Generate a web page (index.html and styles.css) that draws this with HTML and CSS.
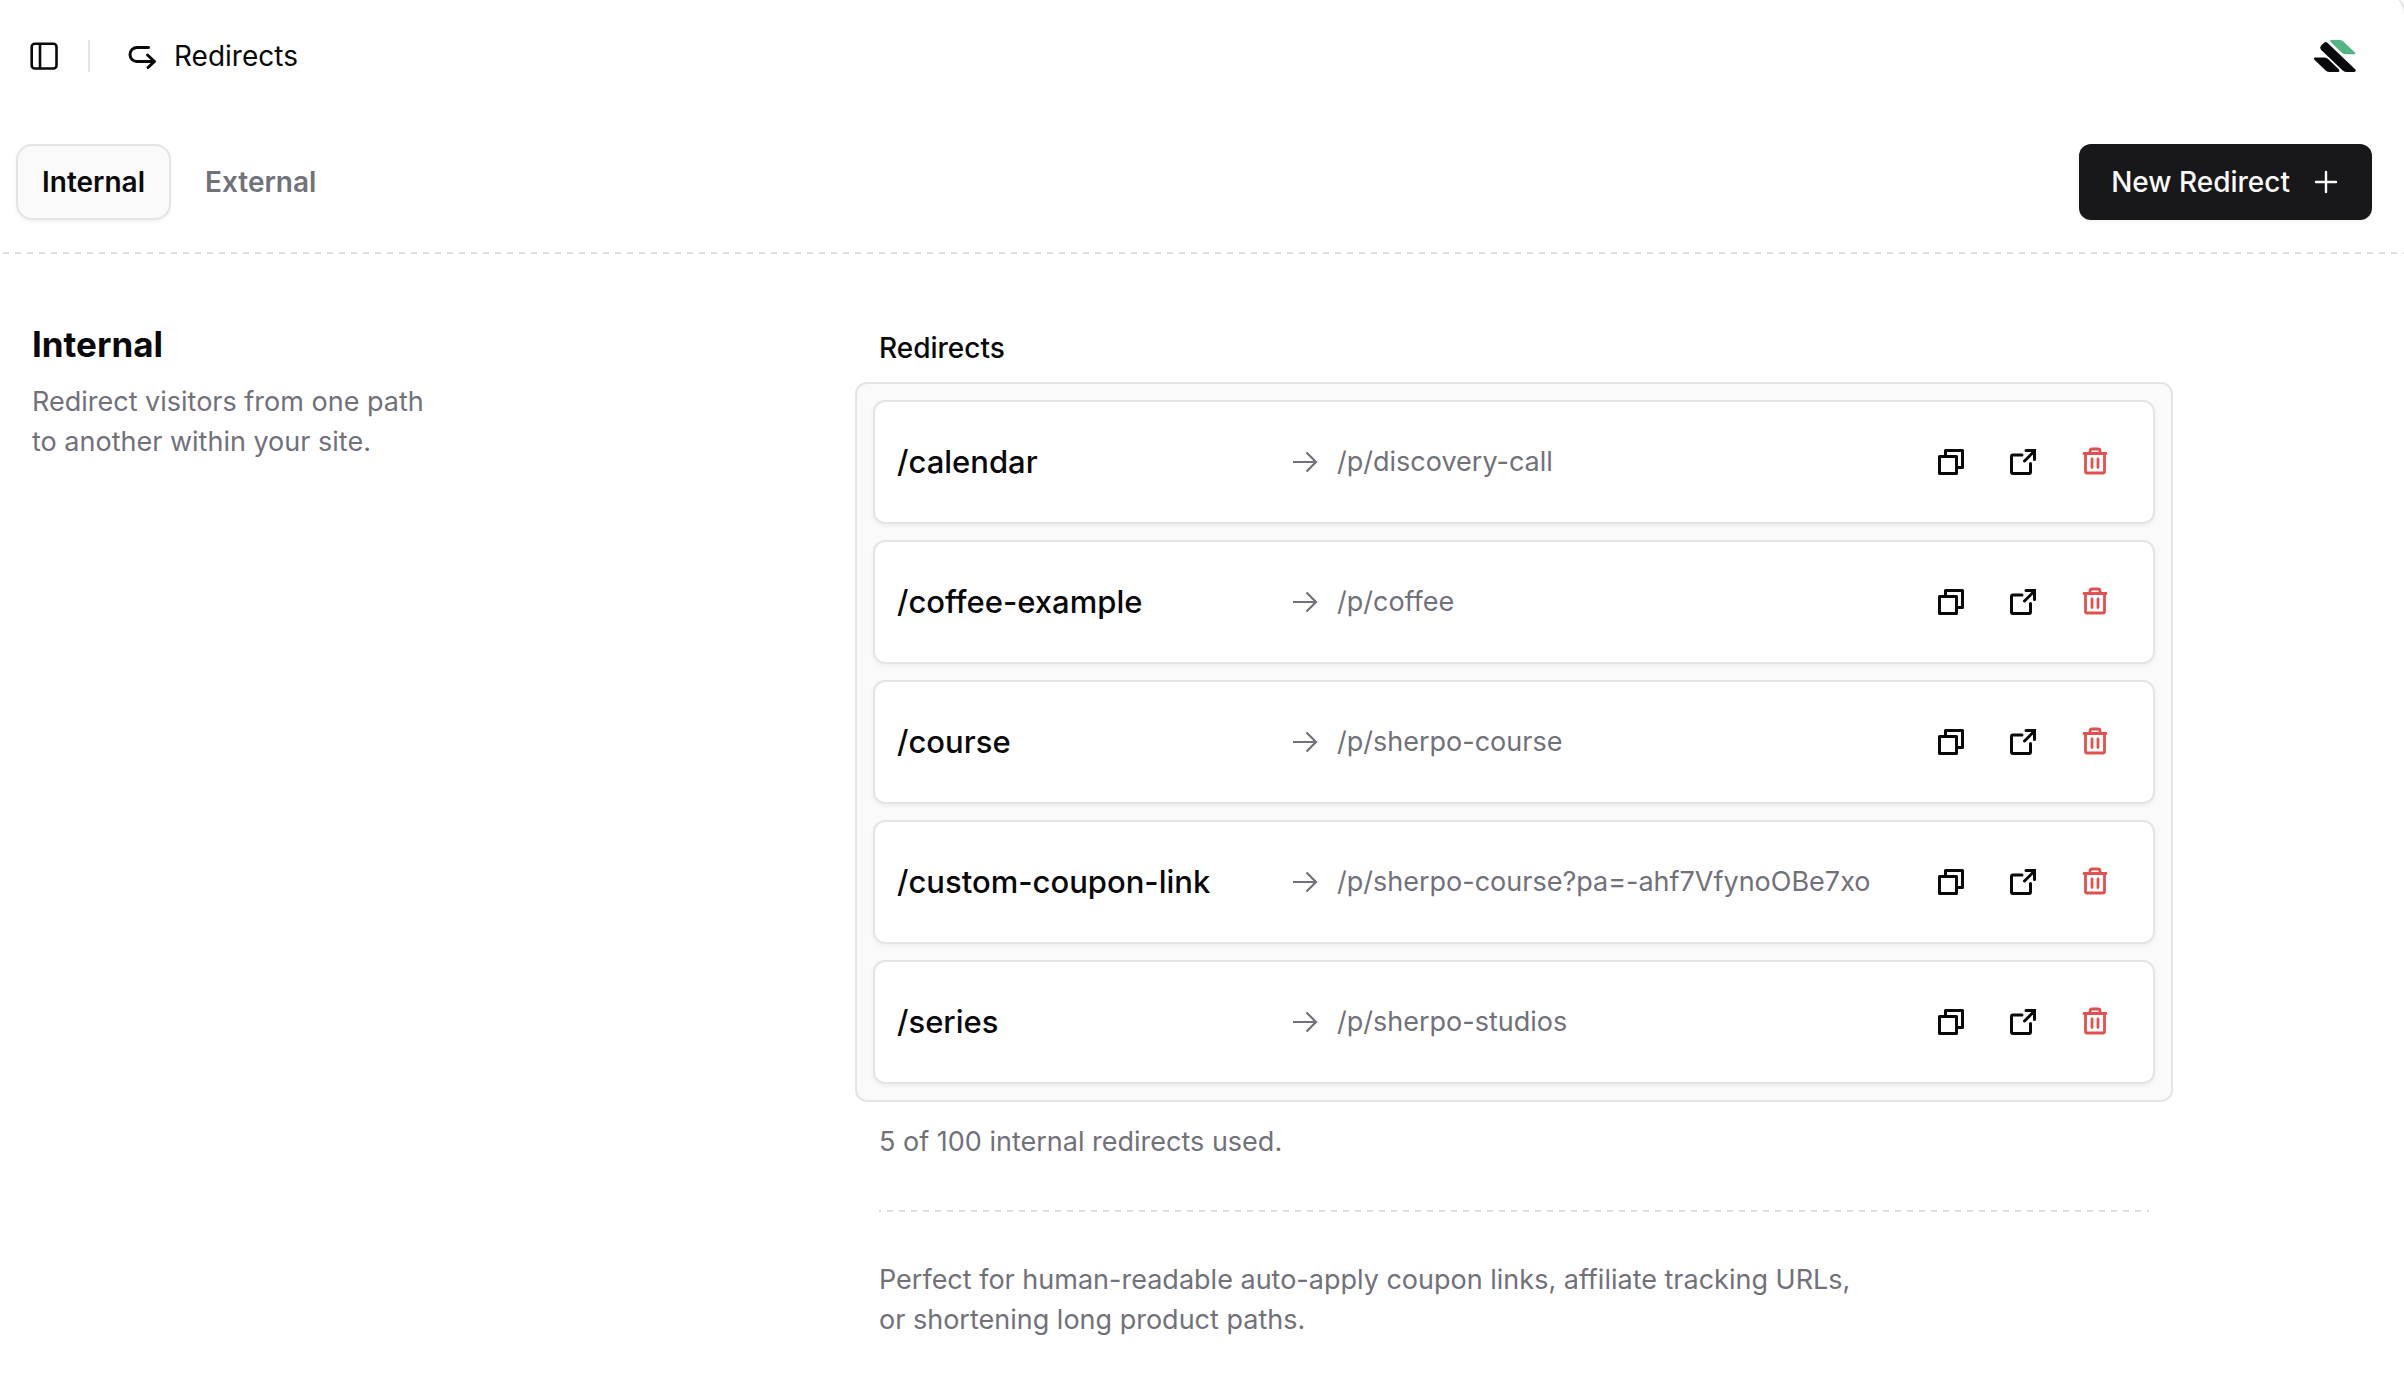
FILE: index.html
```html
<!DOCTYPE html>
<html lang="en">
<head>
  <meta charset="UTF-8">
  <meta name="viewport" content="width=device-width, initial-scale=1.0">
  <title>Redirects</title>
  <link rel="stylesheet" href="styles.css">
</head>
<body>
  <!-- Shared icons -->
  <svg class="sprite" aria-hidden="true">
    <symbol id="icon-arrow" viewBox="0 0 32 32">
      <path d="M4 16h23M17.500 6.500L27 16l-9.500 9.500" fill="none" stroke="currentColor" stroke-width="2.200"/>
    </symbol>
    <symbol id="icon-copy" viewBox="0 0 32 32">
      <path d="M10.500 10.500V4.500h17v17h-6M4.500 10.500h17v17H4.500z" fill="none" stroke="currentColor" stroke-width="3" stroke-linejoin="round"/>
    </symbol>
    <symbol id="icon-open" viewBox="0 0 32 32">
      <path d="M15 9H6q-1.500 0-1.500 1.500V26q0 1.500 1.500 1.500h16q1.500 0 1.500-1.500V17.500M17.500 15L27 5.500M19 4.500h8.500V13.500" fill="none" stroke="currentColor" stroke-width="3" stroke-linecap="round"/>
    </symbol>
    <symbol id="icon-trash" viewBox="0 0 32 32">
      <path d="M5 7.500h22M6.500 8V25.500q0 1.500 1.500 1.500h16q1.500 0 1.500-1.500V8M11 7V5q0-2 2-2h6q2 0 2 2V7M13 13v8.500M19 13v8.500" fill="none" stroke="currentColor" stroke-width="2.800" stroke-linecap="round"/>
    </symbol>
  </svg>

  <main class="app">
    <header class="topbar">
      <button class="icon-btn" type="button" aria-label="Toggle sidebar">
        <svg width="32" height="32" viewBox="0 0 32 32" fill="none" stroke="currentColor" stroke-width="2.600">
          <rect x="3.700" y="3.700" width="24.800" height="24.800" rx="3"/>
          <path d="M12 4v24"/>
        </svg>
      </button>
      <span class="divider"></span>
      <h1 class="page-title">
        <svg width="32" height="32" viewBox="0 0 32 32" fill="none" stroke="currentColor" stroke-width="3" stroke-linecap="round" stroke-linejoin="round">
          <path d="M22.500 7.500H11a7 7 0 0 0 0 14h17M21.500 15l7 6.500-6.500 6"/>
        </svg>
        Redirects
      </h1>
      <a class="logo" href="#" aria-label="Home">
        <svg width="42" height="32" viewBox="0 0 42 32">
          <path fill="#52b583" d="M17 0h8.500q2.200 0 3.800 1.400L41 12.500Q42 14.300 40 14.300H31.500q-1.900 0-3.400-1.400L16.400 1.800Q15.500 0 17 0z"/>
          <path fill="#09090b" d="M7.500 5.200L10.300 2.600q1.500-1.200 3.100.2L41.400 29.500Q42.700 32 40 32h-7q-2.500 0-4.300-1.600L7.500 10.200q-2.500-2.600 0-5z"/>
          <path fill="#09090b" d="M1 17.500h9.500q2 0 3.600 1.500L25 29.500q1 2.500-1 2.500h-8.500q-2 0-3.800-1.500L.4 19.700Q-.6 17.500 1 17.500z"/>
        </svg>
      </a>
    </header>

    <div class="toolbar">
      <nav class="tabs">
        <a class="tab active" href="#internal">Internal</a>
        <a class="tab" href="#external">External</a>
      </nav>
      <button class="new-btn" type="button">
        New Redirect
        <svg width="28" height="28" viewBox="0 0 28 28" fill="none" stroke="currentColor" stroke-width="2.400" stroke-linecap="round">
          <path d="M14 4v20M4 14h20"/>
        </svg>
      </button>
    </div>
    <svg class="dashes" aria-hidden="true"><line x1="3" y1="1" x2="100%" y2="1"/></svg>

    <section class="section" id="internal">
      <div class="intro">
        <h2>Internal</h2>
        <p>Redirect visitors from one path<br>to another within your site.</p>
      </div>

      <div class="content">
        <h3 class="label">Redirects</h3>
        <ul class="list">
          <li class="row">
            <span class="from">/calendar</span>
            <span class="to"><svg><use href="#icon-arrow"/></svg>/p/discovery-call</span>
            <button class="action" type="button" aria-label="Copy"><svg><use href="#icon-copy"/></svg></button>
            <a class="action" href="#" aria-label="Open"><svg><use href="#icon-open"/></svg></a>
            <button class="action delete" type="button" aria-label="Delete"><svg><use href="#icon-trash"/></svg></button>
          </li>
          <li class="row">
            <span class="from">/coffee-example</span>
            <span class="to"><svg><use href="#icon-arrow"/></svg>/p/coffee</span>
            <button class="action" type="button" aria-label="Copy"><svg><use href="#icon-copy"/></svg></button>
            <a class="action" href="#" aria-label="Open"><svg><use href="#icon-open"/></svg></a>
            <button class="action delete" type="button" aria-label="Delete"><svg><use href="#icon-trash"/></svg></button>
          </li>
          <li class="row">
            <span class="from">/course</span>
            <span class="to"><svg><use href="#icon-arrow"/></svg>/p/sherpo-course</span>
            <button class="action" type="button" aria-label="Copy"><svg><use href="#icon-copy"/></svg></button>
            <a class="action" href="#" aria-label="Open"><svg><use href="#icon-open"/></svg></a>
            <button class="action delete" type="button" aria-label="Delete"><svg><use href="#icon-trash"/></svg></button>
          </li>
          <li class="row">
            <span class="from">/custom-coupon-link</span>
            <span class="to"><svg><use href="#icon-arrow"/></svg>/p/sherpo-course?pa=-ahf7VfynoOBe7xo</span>
            <button class="action" type="button" aria-label="Copy"><svg><use href="#icon-copy"/></svg></button>
            <a class="action" href="#" aria-label="Open"><svg><use href="#icon-open"/></svg></a>
            <button class="action delete" type="button" aria-label="Delete"><svg><use href="#icon-trash"/></svg></button>
          </li>
          <li class="row">
            <span class="from">/series</span>
            <span class="to"><svg><use href="#icon-arrow"/></svg>/p/sherpo-studios</span>
            <button class="action" type="button" aria-label="Copy"><svg><use href="#icon-copy"/></svg></button>
            <a class="action" href="#" aria-label="Open"><svg><use href="#icon-open"/></svg></a>
            <button class="action delete" type="button" aria-label="Delete"><svg><use href="#icon-trash"/></svg></button>
          </li>
        </ul>
        <div class="notes">
          <p>5 of 100 internal redirects used.</p>
          <svg class="dashes" aria-hidden="true"><line x1="-4" y1="1" x2="100%" y2="1"/></svg>
          <p>Perfect for human-readable auto-apply coupon links, affiliate tracking URLs,<br>or shortening long product paths.</p>
        </div>
      </div>
    </section>
  </main>
</body>
</html>
```
FILE: styles.css
```css
* {
  box-sizing: border-box;
}
body {
  margin: 0;
  background: #fff;
  color: #09090b;
  font-family: Inter, "Liberation Sans", sans-serif;
  font-size: 28px;
  line-height: 40px;
}
h1, h2, h3, p, ul {
  margin: 0;
  padding: 0;
  font-size: inherit;
}
a {
  color: inherit;
  text-decoration: none;
}
button {
  padding: 0;
  border: 0;
  background: none;
  color: inherit;
  font: inherit;
  cursor: pointer;
}
svg {
  display: block;
  flex-shrink: 0;
}
.sprite {
  display: none;
}
.app {
  position: relative;
  overflow: hidden;
  min-height: 100vh;
}
/* Rounded corner of the app frame */
.app::after {
  content: "";
  position: absolute;
  top: -12px;
  right: -2px;
  width: 32px;
  height: 32px;
  border: 2px solid #e4e4e4;
  border-width: 2px 2px 0 0;
  border-top-right-radius: 28px;
  pointer-events: none;
}

/* Top bar */
.topbar {
  display: flex;
  align-items: center;
  height: 112px;
  padding: 0 48px 0 28px;
}
.divider {
  width: 2px;
  height: 32px;
  margin: 0 36px 0 28px;
  background: #e4e4e4;
}
.page-title {
  display: flex;
  align-items: center;
  gap: 16px;
  font-weight: 400;
}
.logo {
  margin-left: auto;
}

/* Tabs and main action */
.toolbar {
  display: flex;
  align-items: center;
  justify-content: space-between;
  padding: 32px 32px 32px 16px;
}
.tabs {
  display: flex;
  gap: 8px;
}
.tab {
  padding: 16px 24px;
  border: 2px solid transparent;
  border-radius: 16px;
  color: #71717a;
  font-weight: 600;
}
.tab.active {
  border-color: #e4e4e4;
  background: #fafafa;
  color: #09090b;
  box-shadow: 0 2px 4px rgba(0, 0, 0, 0.05);
}
.new-btn {
  display: flex;
  align-items: center;
  gap: 22px;
  padding: 18px 32px;
  border-radius: 12px;
  background: #18181b;
  color: #fafafa;
  font-weight: 500;
  box-shadow: 0 2px 4px rgba(0, 0, 0, 0.05);
}
.dashes {
  width: 100%;
  height: 2px;
  stroke: #dedee0;
  stroke-width: 2;
  stroke-dasharray: 6;
}

/* Internal section */
.section {
  display: grid;
  grid-template-columns: minmax(0, 823px) minmax(0, 1318px);
  padding: 68px 32px 32px;
}
.intro h2 {
  margin-bottom: 16px;
  font-size: 35px;
  line-height: 44px;
  font-weight: 700;
}
.intro p {
  color: #71717a;
  font-size: 27px;
}
.label {
  margin: 6px 24px 14px;
  font-weight: 500;
}
.list {
  display: grid;
  gap: 16px;
  padding: 16px;
  border: 2px solid #e4e4e4;
  border-radius: 12px;
  background: #fafafa;
  list-style: none;
}
.row {
  display: flex;
  align-items: center;
  height: 124px;
  padding: 0 22px;
  border: 2px solid #e4e4e4;
  border-radius: 12px;
  background: #fff;
  box-shadow: 0 2px 4px rgba(0, 0, 0, 0.05);
}
.from {
  width: 392px;
  font-size: 31px;
  font-weight: 500;
}
.to {
  display: flex;
  flex: 1;
  align-items: center;
  gap: 16px;
  color: #71717a;
  font-size: 27px;
}
.row svg {
  width: 32px;
  height: 32px;
}
.action {
  display: flex;
  align-items: center;
  justify-content: center;
  width: 72px;
  height: 72px;
}
.delete {
  color: #e0524f;
}
.notes {
  display: grid;
  gap: 48px;
  padding: 20px 24px;
  color: #71717a;
  font-size: 27px;
}
```
